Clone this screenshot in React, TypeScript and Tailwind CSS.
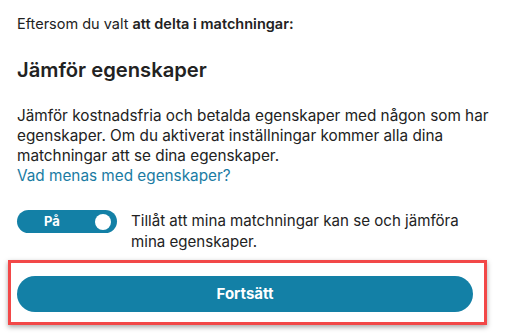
import React from "react";

export default function App() {
  return (
    <div className="w-[507px] h-[335px] bg-white font-['Inter','Liberation_Sans',Arial,sans-serif] text-[#222222] overflow-hidden">
      <div className="pl-[17px] pr-[17px] pt-[14px]">
        <p className="text-[14.5px] leading-[20px]">
          Eftersom du valt <span className="font-semibold">att delta i matchningar:</span>
        </p>
        <h2 className="mt-[22px] text-[20.2px] leading-[28px] font-semibold">Jämför egenskaper</h2>
        <p className="mt-[22px] text-[15.3px] leading-[20px]">
          Jämför kostnadsfria och betalda egenskaper med någon som har egenskaper. Om du aktiverat inställningar kommer alla dina matchningar att se dina egenskaper.
          <br />
          <a className="text-[#1a7ba3]" href="#">Vad menas med egenskaper?</a>
        </p>
        <div className="mt-[24px] flex items-start gap-[14px]">
          <button className="relative flex h-[23px] w-[100px] shrink-0 items-center rounded-full bg-[#1380a6] pl-[6px] pr-[6px]">
            <span className="flex-1 text-center text-[13px] font-bold text-white leading-none">På</span>
            <span className="ml-[14px] h-[16px] w-[16px] rounded-full bg-white" />
          </button>
          <p className="text-[15.1px] leading-[21px]">
            Tillåt att mina matchningar kan se och jämföra mina egenskaper.
          </p>
        </div>
      </div>
      <div className="ml-[8px] mt-[8px] w-[479px] border-[3px] border-[#f24848] pl-[6px] pr-[11px] pt-[13px] pb-[10px] shadow-[0_2px_5px_rgba(0,0,0,0.35)]">
        <button className="flex h-[36px] w-full items-center justify-center rounded-full bg-[#1380a6] text-[15px] font-bold text-white">
          Fortsätt
        </button>
      </div>
    </div>
  );
}
